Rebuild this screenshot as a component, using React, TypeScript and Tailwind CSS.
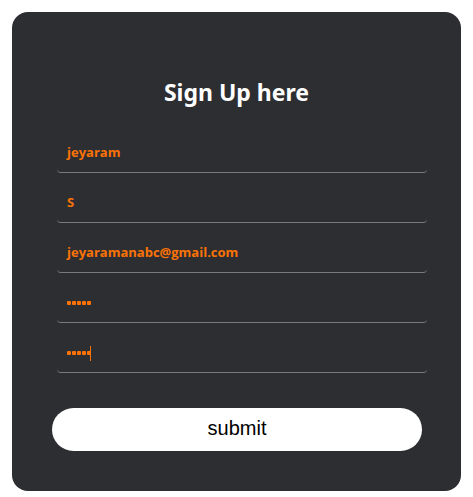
const fields = [
  { value: "jeyaram" },
  { value: "S" },
  { value: "jeyaramanabc@gmail.com" },
  { value: "•••••", secret: true },
  { value: "•••••", secret: true, caret: true },
];

const Dots = () => (
  <span className="flex gap-[1px] mt-[2px]">
    {[0, 1, 2, 3, 4].map((d) => (
      <span key={d} className="w-[4px] h-[4px] rounded-[1px] bg-[#fb7306]" />
    ))}
  </span>
);

const Field = ({ value, secret, caret }: { value: string; secret?: boolean; caret?: boolean }) => {
  return (
    <div className="ml-[45px] w-[370px] h-[41px] flex items-center pl-[10px] border-b border-[#7a7a7c] rounded-[4px] font-['Open_Sans',sans-serif] font-bold text-[13px] text-[#fb7306]">
      {secret ? <Dots /> : <span className="mt-[1px]">{value}</span>}
      {caret && <span className="ml-[-1px] mt-[2px] w-[1px] h-[15px] bg-[#fb7306]" />}
    </div>
  );
};

export default function App() {
  return (
    <div className="bg-white w-[473px] h-[497px] pt-[12px] pl-[12px]">
      <div className="w-[449px] h-[479px] rounded-[16px] bg-[#2d2e32] pt-[65px]">
        <h1 className="text-center text-white font-bold text-[23px] leading-[30px] font-['Noto_Sans',sans-serif]">
          Sign Up here
        </h1>
        <div className="mt-[25px] flex flex-col gap-[9px]">
          {fields.map((f, i) => (
            <Field key={i} {...f} />
          ))}
        </div>
        <button className="mt-[35px] ml-[40px] w-[370px] h-[43px] pb-[3px] rounded-full bg-white text-black text-[20px] font-['Liberation_Sans',sans-serif]">
          submit
        </button>
      </div>
    </div>
  );
}
